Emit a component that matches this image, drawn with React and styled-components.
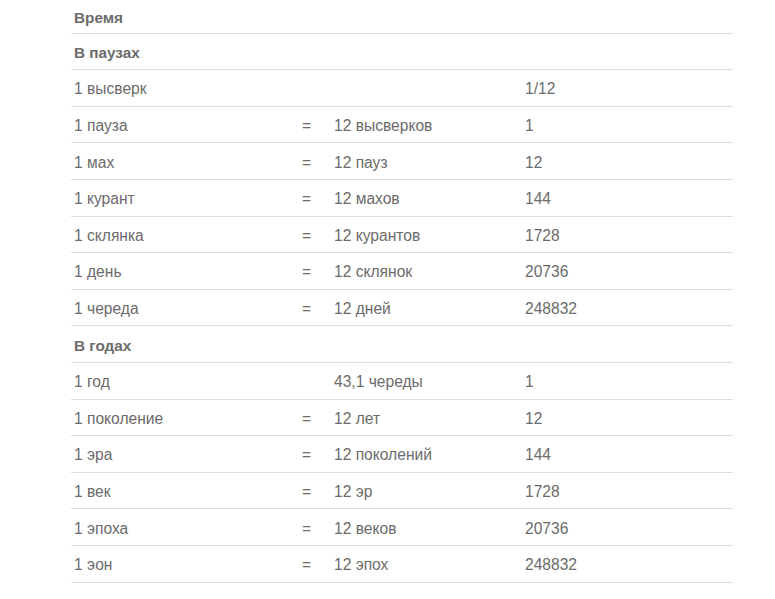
import React from 'react';
import styled, { createGlobalStyle } from 'styled-components';

const GlobalStyle = createGlobalStyle`
    body {
        margin: 0;
        background: #fff;
        font-family: "Liberation Sans", Arial, sans-serif;
    }
`;

const Table = styled.div`
    margin-left: 71px;
    width: 662px;
    color: #6b6b6b;
    font-size: 15.6px;
`;

const Row = styled.div`
    display: grid;
    grid-template-columns: 228px 32px 191px 1fr;
    align-items: center;
    box-sizing: border-box;
    height: ${p => p.first ? '33.6px' : '36.6px'};
    border-bottom: 1px solid #dedede;
    font-weight: ${p => p.head ? 'bold' : 'normal'};
    font-size: ${p => p.head ? '15.3px' : 'inherit'};
`;

const Cell = styled.div`
    padding: 3px 3px 0;
    white-space: nowrap;
`;

const groups = [
    {
        title: 'В паузах',
        rows: [
            ['1 высверк', '', '', '1/12'],
            ['1 пауза', '=', '12 высверков', '1'],
            ['1 мах', '=', '12 пауз', '12'],
            ['1 курант', '=', '12 махов', '144'],
            ['1 склянка', '=', '12 курантов', '1728'],
            ['1 день', '=', '12 склянок', '20736'],
            ['1 череда', '=', '12 дней', '248832'],
        ],
    },
    {
        title: 'В годах',
        rows: [
            ['1 год', '', '43,1 череды', '1'],
            ['1 поколение', '=', '12 лет', '12'],
            ['1 эра', '=', '12 поколений', '144'],
            ['1 век', '=', '12 эр', '1728'],
            ['1 эпоха', '=', '12 веков', '20736'],
            ['1 эон', '=', '12 эпох', '248832'],
        ],
    },
];

const App = () => {
    return (
        <>
            <GlobalStyle />
            <Table>
                <Row head first><Cell>Время</Cell></Row>
                {groups.map(g => (
                    <React.Fragment key={g.title}>
                        <Row head><Cell>{g.title}</Cell></Row>
                        {g.rows.map(r => (
                            <Row key={r[0]}>
                                {r.map((c, i) => <Cell key={i}>{c}</Cell>)}
                            </Row>
                        ))}
                    </React.Fragment>
                ))}
            </Table>
        </>
    );
};

export default App;
